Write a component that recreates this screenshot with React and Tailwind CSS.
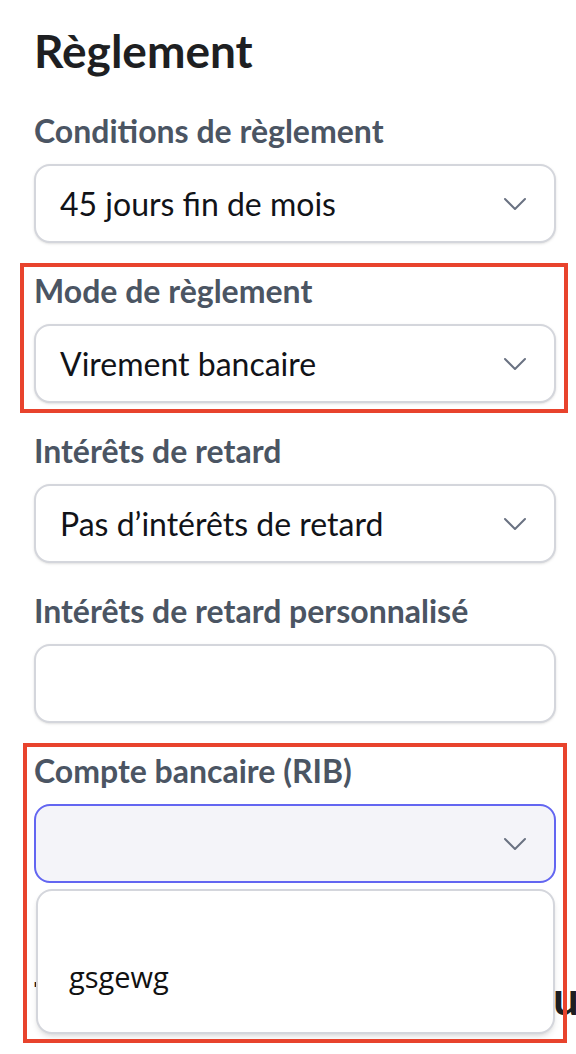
import React from 'react';

const Chevron = () => (
  <svg
    viewBox="0 0 24 24"
    fill="none"
    stroke="currentColor"
    strokeWidth={1.5}
    className="h-8 w-8 text-gray-500 shrink-0"
  >
    <path strokeLinecap="round" strokeLinejoin="round" d="m19.5 8.25-7.5 7.5-7.5-7.5" />
  </svg>
);

const SelectBox = ({ value, focused }) => (
  <div
    className={
      focused
        ? 'mt-[15px] h-[79px] flex items-center justify-between pl-[24px] pr-[23px] rounded-2xl border-2 border-[#6366f1] bg-[#f4f4f9]'
        : 'mt-[15px] h-[79px] flex items-center justify-between pl-[24px] pr-[23px] rounded-2xl border-2 border-[#d4d6dc] bg-white shadow-sm'
    }
  >
    <span className="text-[32px] text-[#111318] whitespace-nowrap">{value}</span>
    <Chevron />
  </div>
);

const Label = ({ children }) => (
  <div className="h-9 leading-9 text-[32px] font-bold text-[#4b5563] whitespace-nowrap">{children}</div>
);

const Highlight = ({ className }) => (
  <div className={'absolute border-4 border-[#e8432d] pointer-events-none z-20 ' + className} />
);

export default function App() {
  return (
    <div className="min-h-[1054px] bg-white overflow-hidden font-['Lato',sans-serif]">
      <div className="pl-[34px] pr-[20px] pt-[23px]">
        <h1 className="text-[46px] leading-[55px] font-bold text-[#1e1f22]">Règlement</h1>

        <div className="mt-[35px] flex flex-col gap-[30px]">
          <div>
            <Label>Conditions de règlement</Label>
            <SelectBox value="45 jours fin de mois" />
          </div>

          <div className="relative">
            <Highlight className="-top-[10px] -bottom-[10px] -left-[14px] -right-[12px]" />
            <Label>Mode de règlement</Label>
            <SelectBox value="Virement bancaire" />
          </div>

          <div>
            <Label>Intérêts de retard</Label>
            <SelectBox value="Pas d’intérêts de retard" />
          </div>

          <div>
            <Label>Intérêts de retard personnalisé</Label>
            <div className="mt-[15px] h-[79px] rounded-2xl border-2 border-[#d4d6dc] bg-white shadow-sm" />
          </div>

          <div className="relative">
            <Highlight className="-top-[10px] h-[300px] -left-[11px] -right-[11px]" />
            <Label>Compte bancaire (RIB)</Label>
            <SelectBox value="" focused />
            {/* open listbox */}
            <div className="absolute left-[2px] right-[1px] top-[136px] h-[145px] z-10 rounded-2xl border-2 border-[#d4d6dc] bg-white shadow-md py-2 font-['Open_Sans',sans-serif]">
              <div className="h-[52px]" />
              <div className="h-[52px] flex items-center pl-[31px] text-[29px] text-[#111]">gsgewg</div>
            </div>
          </div>
        </div>

        <h2 className="mt-[87px] text-[46px] leading-[55px] font-bold tracking-[-0.3px] text-[#1e1f22] whitespace-nowrap">
          Texte affiché pour le lecteur
        </h2>
      </div>
    </div>
  );
}
